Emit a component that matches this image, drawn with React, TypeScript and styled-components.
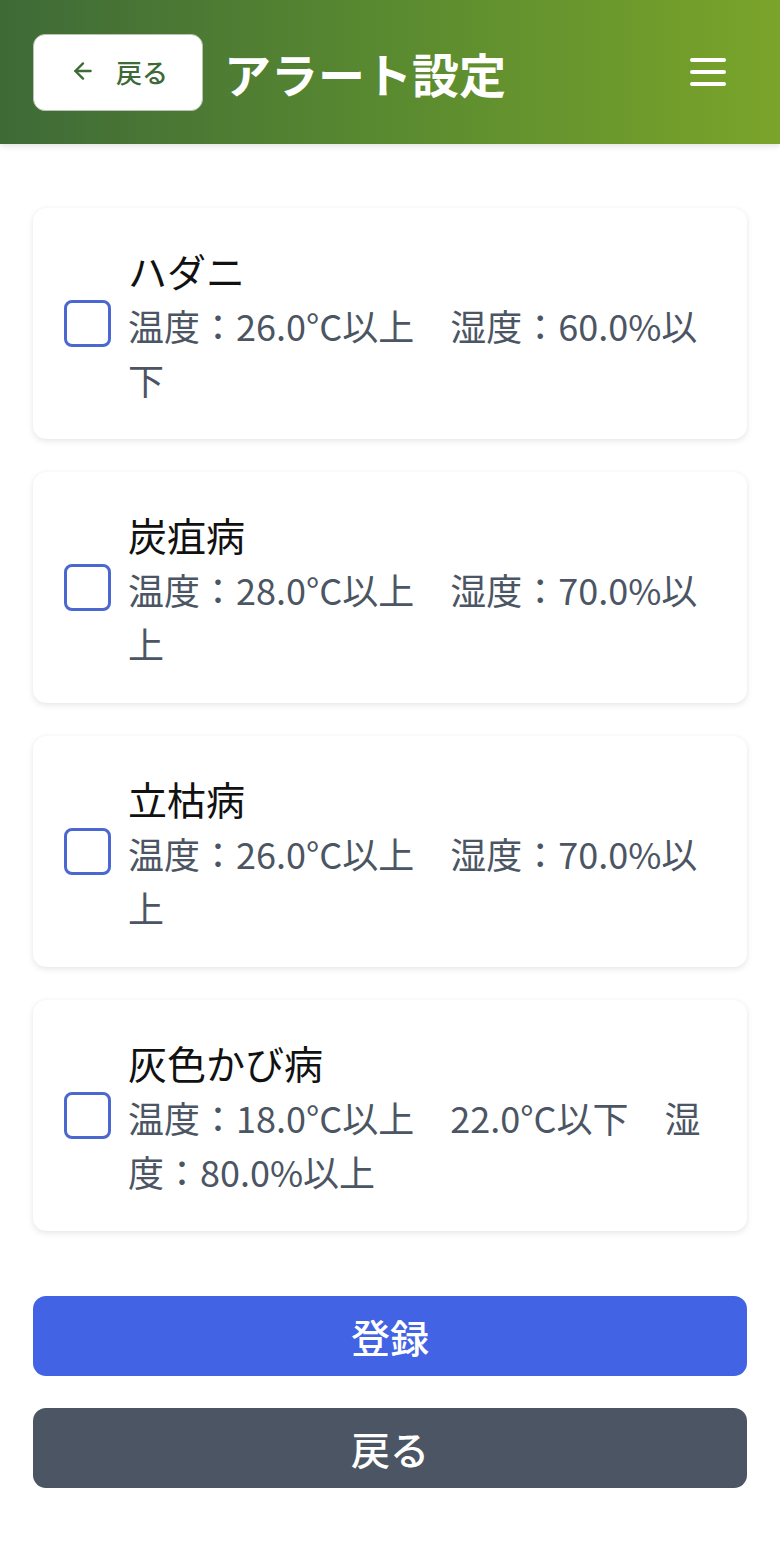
import React from 'react';
import styled, { createGlobalStyle } from 'styled-components';
import { ArrowLeft } from 'lucide-react';

const GlobalStyle = createGlobalStyle`
  html, body {
    margin: 0;
    padding: 0;
    background: #ffffff;
  }
  body {
    font-family: "Noto Sans CJK JP", "Noto Sans", sans-serif;
  }
  * {
    box-sizing: border-box;
  }
`;

interface Alert {
  name: string;
  condition: string;
}

const alerts: Alert[] = [
  { name: 'ハダニ', condition: '温度：26.0°C以上\u3000湿度：60.0%以下' },
  { name: '炭疽病', condition: '温度：28.0°C以上\u3000湿度：70.0%以上' },
  { name: '立枯病', condition: '温度：26.0°C以上\u3000湿度：70.0%以上' },
  {
    name: '灰色かび病',
    condition: '温度：18.0°C以上\u300022.0°C以下\u3000湿度：80.0%以上',
  },
];

function App() {
  return (
    <Page>
      <GlobalStyle />
      <Header>
        <BackLink type="button">
          <ArrowLeft size={26} strokeWidth={2.2} />
          <span>戻る</span>
        </BackLink>
        <Title>アラート設定</Title>
        <MenuButton type="button" aria-label="menu">
          <MenuLine />
          <MenuLine />
          <MenuLine />
        </MenuButton>
      </Header>

      <Main>
        <CardList>
          {alerts.map((alert) => (
            <Card key={alert.name}>
              <CheckBox type="checkbox" />
              <CardText>
                <AlertName>{alert.name}</AlertName>
                <AlertCondition>{alert.condition}</AlertCondition>
              </CardText>
            </Card>
          ))}
        </CardList>

        <Actions>
          <ActionButton type="button" variant="primary">
            登録
          </ActionButton>
          <ActionButton type="button" variant="secondary">
            戻る
          </ActionButton>
        </Actions>
      </Main>
    </Page>
  );
}

export default App;

const Page = styled.div`
  min-height: 1552px;
  background: #ffffff;
`;

const Header = styled.header`
  height: 144px;
  padding: 0 32px 0 33px;
  display: flex;
  align-items: center;
  background: linear-gradient(to right, #3e6a37 0%, #5a8a30 50%, #7aa42a 100%);
  box-shadow: 0 2px 6px rgba(0, 0, 0, 0.12);
`;

const BackLink = styled.button`
  width: 170px;
  height: 77px;
  display: flex;
  align-items: center;
  justify-content: center;
  gap: 20px;
  background: #ffffff;
  border: 1.5px solid #b9c4b4;
  border-radius: 12px;
  color: #3e6a37;
  font-family: inherit;
  font-size: 26px;
  font-weight: 500;
  padding: 0 0 2px 2px;
  cursor: pointer;
`;

const Title = styled.h1`
  margin: 0 0 0 21px;
  flex: 1;
  color: #ffffff;
  font-size: 47px;
  font-weight: 700;
  letter-spacing: 0;
`;

const MenuButton = styled.button`
  width: 36px;
  height: 28px;
  display: flex;
  flex-direction: column;
  justify-content: space-between;
  padding: 0;
  margin-right: 22px;
  background: none;
  border: none;
  cursor: pointer;
`;

const MenuLine = styled.span`
  display: block;
  height: 4px;
  border-radius: 2px;
  background: #ffffff;
`;

const Main = styled.main`
  padding: 64px 33px 64px;
`;

const CardList = styled.div`
  display: flex;
  flex-direction: column;
  gap: 33px;
`;

const Card = styled.label`
  display: flex;
  align-items: center;
  gap: 17px;
  min-height: 231px;
  padding: 32px 32px 32px 31px;
  background: #ffffff;
  border-radius: 13px;
  box-shadow: 0 2px 6px rgba(0, 0, 0, 0.1), 0 0 1px rgba(0, 0, 0, 0.06);
`;

const CheckBox = styled.input`
  appearance: none;
  flex: none;
  width: 47px;
  height: 47px;
  margin: 0;
  border: 3.5px solid #4a68d0;
  border-radius: 8px;
  background: #ffffff;
`;

const CardText = styled.div`
  flex: 1;
  min-width: 0;
`;

const AlertName = styled.div`
  color: #111111;
  font-size: 39px;
  line-height: 56px;
  font-weight: 400;
`;

const AlertCondition = styled.div`
  color: #4b5563;
  font-size: 36px;
  line-height: 54px;
`;

const Actions = styled.div`
  margin-top: 65px;
  display: flex;
  flex-direction: column;
  gap: 32px;
`;

const ActionButton = styled.button<{ variant: 'primary' | 'secondary' }>`
  height: 80px;
  border: none;
  border-radius: 13px;
  color: #ffffff;
  font-family: inherit;
  font-size: 39px;
  font-weight: 500;
  background: ${({ variant }) => (variant === 'primary' ? '#4263e3' : '#4b5563')};
  cursor: pointer;
`;
